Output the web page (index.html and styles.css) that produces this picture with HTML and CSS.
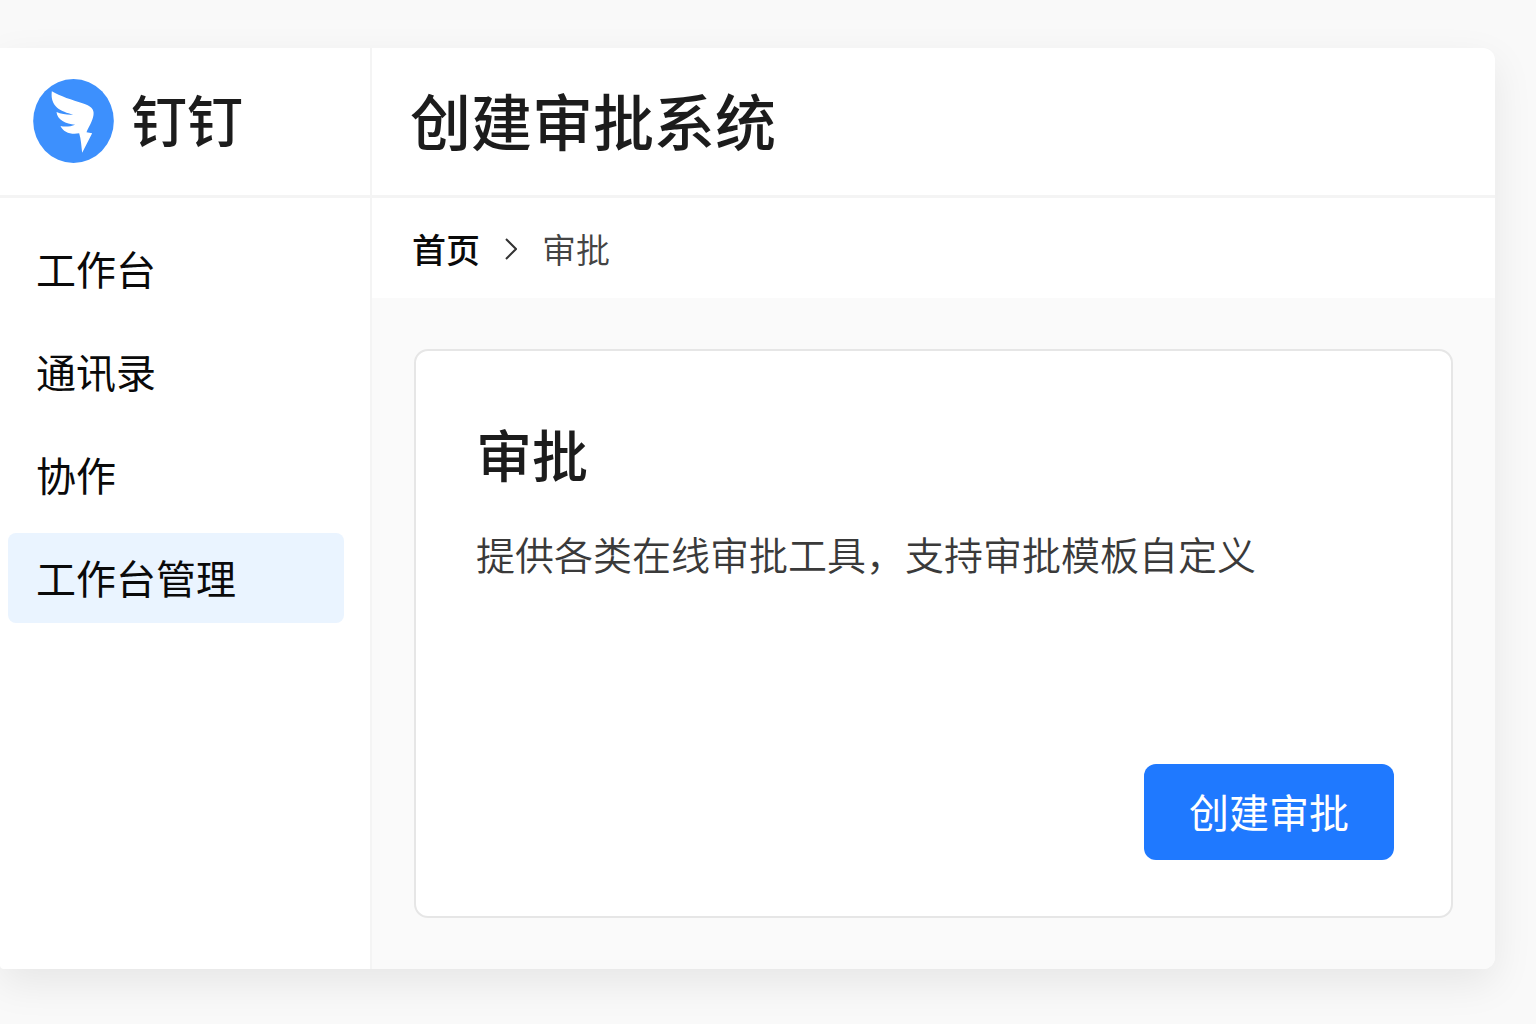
FILE: index.html
```html
<!DOCTYPE html>
<html lang="zh-CN">
<head>
  <meta charset="UTF-8">
  <title>创建审批系统</title>
  <link rel="stylesheet" href="styles.css">
</head>
<body>

  <div class="app">
    <aside class="sidebar">
      <div class="brand">
        <svg class="brand-logo" viewBox="0 0 242 252" aria-hidden="true">
          <ellipse cx="121" cy="126" rx="121" ry="126" fill="#3d90fd"/>
          <path fill="#fff" d="M56 37 C80 52 118 63 148 73 C172 81 184 90 181 108 C178 128 166 144 160 160 L177 163 L147 221 C144 200 144 182 138 163 C114 168 90 160 82 141 C95 144 112 143 126 137 C98 135 72 123 70 99 C85 106 104 108 120 107 C84 98 50 84 56 37 Z"/>
        </svg>
        <span class="brand-name">钉钉</span>
      </div>
      <nav class="menu">
        <a href="#">工作台</a>
        <a href="#">通讯录</a>
        <a href="#">协作</a>
        <a href="#" class="active">工作台管理</a>
      </nav>
    </aside>

    <main class="main">
      <header class="header">
        <h1>创建审批系统</h1>
      </header>

      <div class="breadcrumb">
        <a href="#">首页</a>
        <svg class="chevron" viewBox="0 0 12 22" aria-hidden="true">
          <path d="M1 1 L11 11 L1 21" fill="none" stroke="#333" stroke-width="2"/>
        </svg>
        <span>审批</span>
      </div>

      <div class="content">
        <section class="card">
          <h2>审批</h2>
          <p>提供各类在线审批工具，支持审批模板自定义</p>
          <button type="button">创建审批</button>
        </section>
      </div>
    </main>
  </div>

</body>
</html>
```
FILE: styles.css
```css
* {
  box-sizing: border-box;
}

body {
  font-family: "Noto Sans CJK SC", sans-serif;
  background-color: #f9f9f9;
  color: #1c1c1c;
  display: flex;
  min-height: 100vh;
  margin: 0;
  padding: 48px 41px 55px 0;
}

a {
  color: #0a0a0a;
  text-decoration: none;
}

.app {
  flex: 1;
  display: flex;
  background-color: #ffffff;
  border-radius: 0 12px 12px 4px;
  box-shadow: 0 14px 40px rgba(0, 0, 0, 0.08);
  overflow: hidden;
}

.sidebar {
  width: 372px;
  border-right: 2px solid #f4f4f4;
}

.brand {
  display: flex;
  align-items: center;
  gap: 17px;
  height: 150px;
  padding: 0 33px 2px;
  border-bottom: 3px solid #f4f4f4;
}

.brand-logo {
  width: 81px;
  height: 84px;
}

.brand-name {
  padding-bottom: 6px;
  font-size: 56px;
  line-height: 80px;
  font-weight: 500;
}

.menu {
  display: flex;
  flex-direction: column;
  gap: 13px;
  padding: 26px 26px 26px 8px;
}

.menu a {
  padding: 0 28px 2px;
  font-size: 40px;
  line-height: 88px;
  border-radius: 8px;
}

.menu a.active {
  background-color: #eaf4ff;
}

.main {
  flex: 1;
  display: flex;
  flex-direction: column;
}

.header {
  display: flex;
  align-items: center;
  height: 150px;
  padding: 0 38px 4px;
  border-bottom: 3px solid #f4f4f4;
}

h1 {
  margin: 0;
  font-size: 61px;
  line-height: 80px;
  font-weight: 500;
}

.breadcrumb {
  display: flex;
  align-items: center;
  height: 100px;
  padding: 0 40px;
  font-size: 34px;
}

.breadcrumb a {
  font-weight: 500;
}

.breadcrumb span {
  color: #444;
  font-weight: 350;
}

.chevron {
  width: 12px;
  height: 22px;
  margin: 2px 25px 0;
}

.content {
  flex: 1;
  display: flex;
  padding: 51px 42px;
  background-color: #fafafa;
}

.card {
  flex: 1;
  display: flex;
  flex-direction: column;
  padding: 52px 57px 56px 60px;
  background-color: #ffffff;
  border: 2px solid #e6e6e6;
  border-radius: 14px;
}

h2 {
  margin: 0;
  font-size: 56px;
  line-height: 100px;
  font-weight: 500;
}

p {
  margin: 20px 0;
  font-size: 39px;
  line-height: 60px;
  font-weight: 350;
  color: #3a3a3a;
}

button {
  align-self: flex-end;
  margin-top: auto;
  padding: 0 45px 2px;
  font-family: inherit;
  font-size: 40px;
  line-height: 94px;
  color: #ffffff;
  background-color: #1f79ff;
  border: none;
  border-radius: 12px;
  cursor: pointer;
}
```
